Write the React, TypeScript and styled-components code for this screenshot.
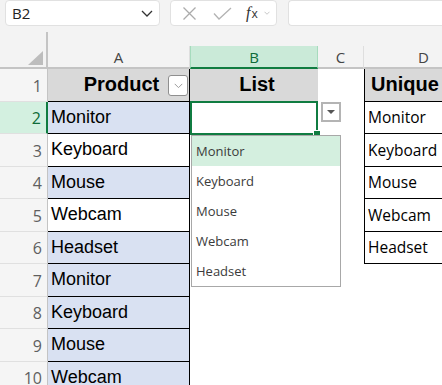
import React from 'react';
import styled, { createGlobalStyle } from 'styled-components';

const GlobalStyle = createGlobalStyle`
    html, body {
        margin: 0;
        padding: 0;
        background: #ffffff;
        overflow: hidden;
    }
    * {
        box-sizing: border-box;
    }
`;

const ARIAL = `"Liberation Sans", Arial, sans-serif`;
const SEGOE = `"Open Sans", "Noto Sans", sans-serif`;
const GREEN = '#107c41';

const Page = styled.div`
    width: 442px;
    height: 385px;
    overflow: hidden;
    background: #ffffff;
`;

// 수식 입력줄
const FormulaBar = styled.div`
    display: flex;
    align-items: flex-start;
    height: 32px;
    padding-left: 5px;
    background: #f3f3f3;
    font-family: ${SEGOE};
`;
const NameBox = styled.div`
    display: flex;
    align-items: center;
    justify-content: space-between;
    width: 155px;
    height: 26px;
    padding: 0 6px 0 6px;
    background: #ffffff;
    border: 1px solid #e1e1e1;
    border-radius: 4px;
    font-size: 15px;
    color: #222;
`;
const FuncBox = styled.div`
    display: flex;
    align-items: center;
    width: 107px;
    height: 26px;
    margin-left: 10px;
    padding-left: 11px;
    background: #ffffff;
    border: 1px solid #e1e1e1;
    border-radius: 4px;
    gap: 16px;
`;
const FxLabel = styled.span`
    display: flex;
    align-items: baseline;
    font-family: "Liberation Serif", serif;
    color: #333;
    font-size: 16px;
    font-style: italic;
    margin-left: -2px;
    sub {
        font-style: normal;
        font-family: ${SEGOE};
        font-size: 12px;
        vertical-align: baseline;
        margin-left: 1px;
    }
`;
const FormulaInput = styled.div`
    flex: 1;
    height: 26px;
    margin-left: 11px;
    background: #ffffff;
    border: 1px solid #e1e1e1;
    border-right: none;
    border-radius: 4px 0 0 4px;
`;

// 시트 그리드
const Sheet = styled.div`
    display: grid;
    grid-template-columns: 48px 142px 128px 46px 120px;
    grid-template-rows: 37px repeat(10, 32.5px);
`;
const Corner = styled.div`
    position: relative;
    background: #f3f3f3;
    border-right: 2px solid #c4c4c4;
    border-bottom: 2px solid #c4c4c4;
    &::after {
        content: '';
        position: absolute;
        right: 3px;
        bottom: 2px;
        width: 0;
        height: 0;
        border-left: 15px solid transparent;
        border-bottom: 14px solid #bdbdbd;
    }
`;
const ColHeaderWrap = styled.div`
    display: flex;
    align-items: flex-end;
    background: #f3f3f3;
`;
const ColHeader = styled.div<{ $active?: boolean }>`
    display: flex;
    align-items: center;
    justify-content: center;
    width: 100%;
    height: 23px;
    font-family: ${SEGOE};
    font-size: 15px;
    color: ${({ $active }) => ($active ? '#0e6b38' : '#444')};
    background: ${({ $active }) => ($active ? '#caead8' : '#f3f3f3')};
    border-right: 1px solid ${({ $active }) => ($active ? '#a6dbbd' : '#dedede')};
    border-left: ${({ $active }) => ($active ? '1px solid #a6dbbd' : 'none')};
    border-bottom: 2px solid ${({ $active }) => ($active ? GREEN : '#c4c4c4')};
`;
const RowHeader = styled.div<{ $active?: boolean }>`
    display: flex;
    align-items: center;
    justify-content: flex-end;
    padding-right: 5px;
    padding-top: 2px;
    font-family: ${SEGOE};
    font-size: 16px;
    color: ${({ $active }) => ($active ? '#0e6b38' : '#5f5f5f')};
    background: ${({ $active }) => ($active ? '#d3f0e0' : '#f5f5f5')};
    border-bottom: 1px solid #e0e0e0;
    border-right: ${({ $active }) => ($active ? `2px solid ${GREEN}` : '1px solid #c4c4c4')};
`;
const Cell = styled.div<{
    $bg?: string;
    $header?: boolean;
    $right?: boolean;
    $left?: boolean;
    $bottom?: boolean;
    $center?: boolean;
    $segoe?: boolean;
}>`
    position: relative;
    display: flex;
    align-items: center;
    justify-content: ${({ $center }) => ($center ? 'center' : 'flex-start')};
    padding-left: ${({ $header }) => ($header ? '6px' : '3px')};
    background: ${({ $bg }) => $bg || '#ffffff'};
    font-family: ${({ $segoe }) => ($segoe ? SEGOE : ARIAL)};
    font-size: ${({ $header, $segoe }) => ($header ? '20px' : $segoe ? '15.5px' : '18px')};
    font-weight: ${({ $header }) => ($header ? 700 : 400)};
    color: #000;
    white-space: nowrap;
    border-right: ${({ $right }) => ($right ? '1px solid #000' : 'none')};
    border-left: ${({ $left }) => ($left ? '1px solid #000' : 'none')};
    border-bottom: ${({ $bottom }) => ($bottom ? '1px solid #000' : 'none')};
`;
const FilterButton = styled.div`
    position: absolute;
    right: 1px;
    top: 6px;
    display: flex;
    align-items: center;
    justify-content: center;
    width: 20px;
    height: 21px;
    background: #ffffff;
    border: 1px solid #8f8f8f;
    border-radius: 3px;
`;
const ActiveCell = styled.div`
    position: relative;
    z-index: 3;
    background: #ffffff;
`;
const SelectionBox = styled.div`
    position: absolute;
    left: 0;
    right: 0;
    top: -1px;
    bottom: -1px;
    border: 2px solid ${GREEN};
    &::after {
        content: '';
        position: absolute;
        right: -4px;
        bottom: -3px;
        width: 6px;
        height: 5px;
        background: ${GREEN};
        border-left: 1px solid #fff;
        border-top: 1px solid #fff;
    }
`;
const DropButton = styled.div`
    position: absolute;
    left: 131px;
    top: 0;
    display: flex;
    align-items: center;
    justify-content: center;
    width: 20px;
    height: 20px;
    background: #ffffff;
    border: 2px solid #b4b4b4;
    &::after {
        content: '';
        width: 0;
        height: 0;
        border-left: 4px solid transparent;
        border-right: 4px solid transparent;
        border-top: 4px solid #555;
    }
`;
const DropList = styled.div`
    position: absolute;
    left: 1px;
    top: calc(100% + 1px);
    width: 150px;
    display: flex;
    flex-direction: column;
    background: #ffffff;
    border: 1px solid #a8a8a8;
`;
const DropItem = styled.div<{ $active?: boolean }>`
    display: flex;
    align-items: center;
    height: 30px;
    padding-left: 4px;
    font-family: ${SEGOE};
    font-size: 13px;
    color: #3b3b3b;
    background: ${({ $active }) => ($active ? '#d4efdf' : '#ffffff')};
`;

const products = ['Monitor', 'Keyboard', 'Mouse', 'Webcam', 'Headset', 'Monitor', 'Keyboard', 'Mouse', 'Webcam'];
const unique = ['Monitor', 'Keyboard', 'Mouse', 'Webcam', 'Headset'];
const BLUE = '#d9e1f2';
const GRAY = '#d9d9d9';

const Chevron = ({ color, size }: { color: string; size: number }) => (
    <svg width={size} height={size / 2 + 1} viewBox="0 0 12 7">
        <path d="M1 1l5 5 5-5" fill="none" stroke={color} strokeWidth="1.3" />
    </svg>
);

const App: React.FC = () => {
    const rows = Array.from({ length: 10 }, (_, i) => i + 1);
    return (
        <Page>
            <GlobalStyle />
            <FormulaBar>
                <NameBox>
                    B2
                    <Chevron color="#333" size={12} />
                </NameBox>
                <FuncBox>
                    <svg width="15" height="15" viewBox="0 0 15 15">
                        <path d="M1.5 1.5l12 12M13.5 1.5l-12 12" stroke="#ababab" strokeWidth="1.3" />
                    </svg>
                    <svg width="19" height="13" viewBox="0 0 19 13">
                        <path d="M1 6.5l5 5.5L18 1" fill="none" stroke="#b3b3b3" strokeWidth="1.3" />
                    </svg>
                    <FxLabel>
                        f<sub>x</sub>
                        <span style={{ marginLeft: 6, display: 'inline-flex', alignSelf: 'center' }}>
                            <Chevron color="#aaa" size={6} />
                        </span>
                    </FxLabel>
                </FuncBox>
                <FormulaInput />
            </FormulaBar>

            <Sheet>
                <Corner />
                {['A', 'B', 'C', 'D'].map((c) => (
                    <ColHeaderWrap key={c}>
                        <ColHeader $active={c === 'B'}>{c}</ColHeader>
                    </ColHeaderWrap>
                ))}

                {rows.map((r) => {
                    const aBg = r === 1 ? GRAY : r === 3 || r === 5 ? '#ffffff' : BLUE;
                    const dText = r >= 2 && r <= 6 ? unique[r - 2] : '';
                    return (
                        <React.Fragment key={r}>
                            <RowHeader $active={r === 2}>{r}</RowHeader>
                            {r === 1 ? (
                                <Cell $bg={GRAY} $header $center $right $bottom>
                                    Product
                                    <FilterButton>
                                        <Chevron color="#9a9a9a" size={9} />
                                    </FilterButton>
                                </Cell>
                            ) : (
                                <Cell $bg={aBg} $right $bottom>
                                    {products[r - 2]}
                                </Cell>
                            )}
                            {r === 1 ? (
                                <Cell $bg={GRAY} $header $center $bottom>
                                    List
                                </Cell>
                            ) : r === 2 ? (
                                <ActiveCell>
                                    <SelectionBox />
                                    <DropButton />
                                    <DropList>
                                        {unique.map((u, i) => (
                                            <DropItem key={u} $active={i === 0}>
                                                {u}
                                            </DropItem>
                                        ))}
                                    </DropList>
                                </ActiveCell>
                            ) : (
                                <Cell />
                            )}
                            <Cell />
                            {r === 1 ? (
                                <Cell $bg={GRAY} $header $left $bottom>
                                    Unique
                                </Cell>
                            ) : r <= 6 ? (
                                <Cell $segoe $left $bottom>
                                    {dText}
                                </Cell>
                            ) : (
                                <Cell />
                            )}
                        </React.Fragment>
                    );
                })}
            </Sheet>
        </Page>
    );
};

export default App;
